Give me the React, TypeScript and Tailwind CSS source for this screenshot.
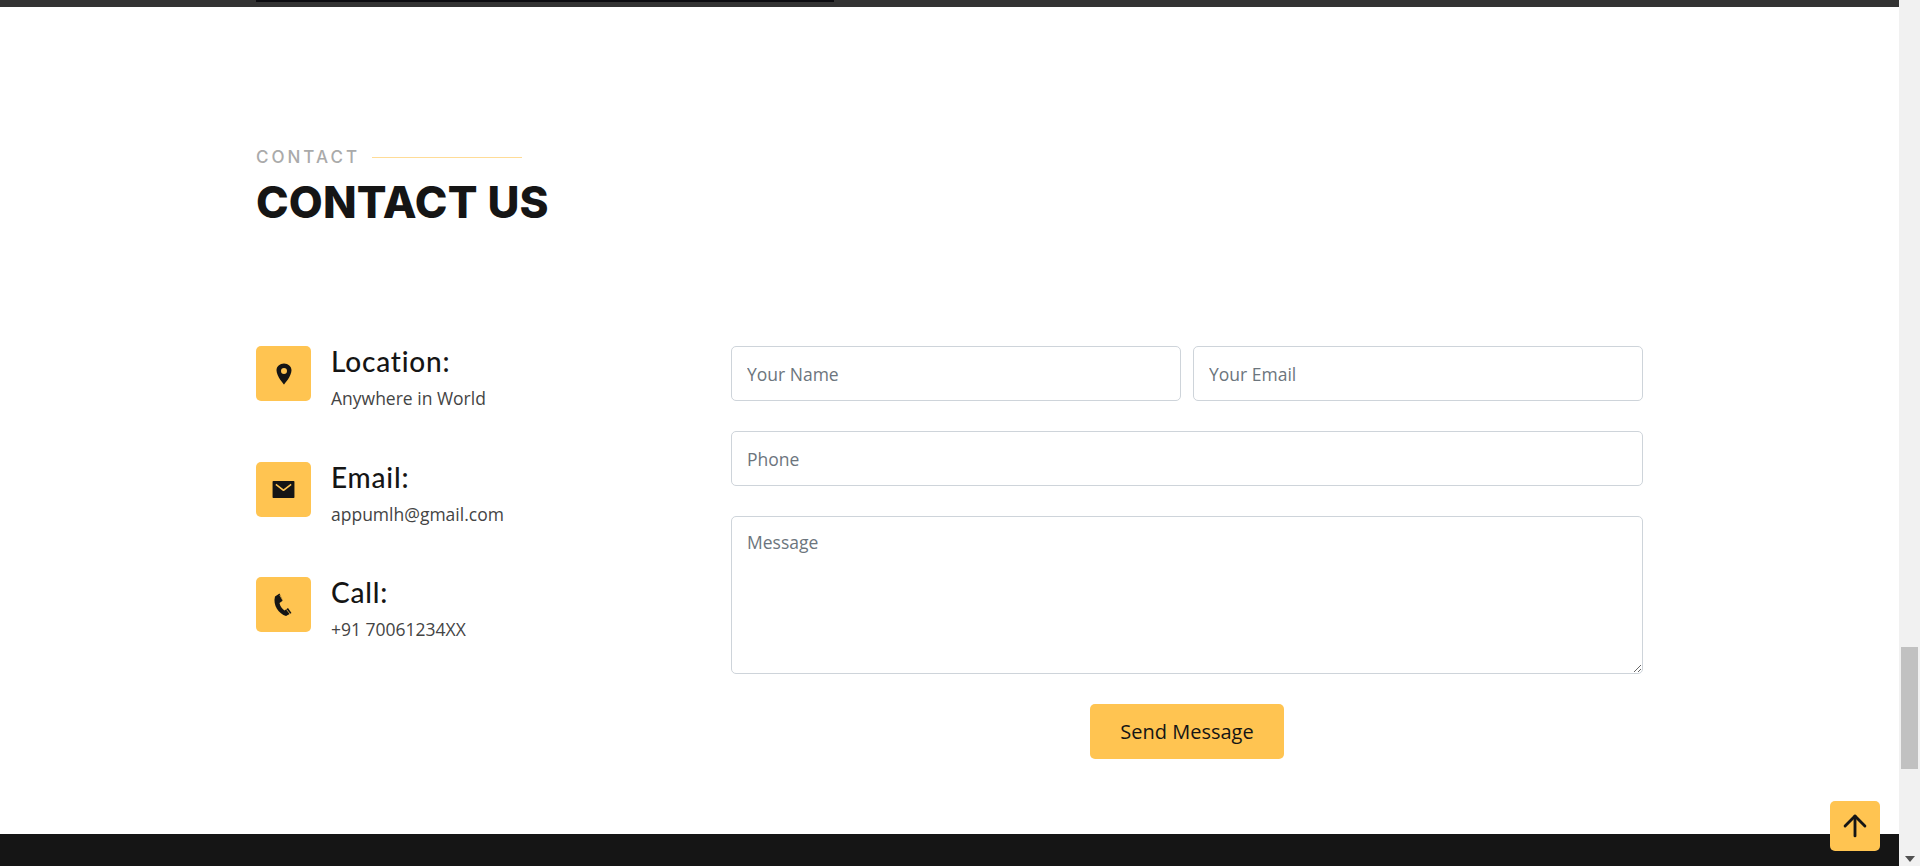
import { IoLocationSharp, IoMailSharp } from 'react-icons/io5';
import { LuArrowUp } from 'react-icons/lu';
import type { ReactNode } from 'react';

const PhoneIcon = () => (
  <svg width="40" height="40" viewBox="0 0 40 40" fill="currentColor">
    <path d="M11 11.5 15.5 8.5 19 15.5 15.5 18C16 21 18 24 20.5 25.5L24 23 27.5 28 22 31C15 29 8.5 20 11 11.5Z" />
    <path d="M15.8 10 19.3 16.2M22.5 24.5 26 29" stroke="#ffc451" strokeWidth="0.8" fill="none" />
  </svg>
);

const CONTACT_INFO: { icon: ReactNode; title: string; text: string; gap: string }[] = [
  { icon: <IoLocationSharp size={24} />, title: 'Location:', text: 'Anywhere in World', gap: 'mb-[51px]' },
  { icon: <IoMailSharp size={25} />, title: 'Email:', text: 'appumlh@gmail.com', gap: 'mb-[50px]' },
  { icon: <PhoneIcon />, title: 'Call:', text: '+91 70061234XX', gap: '' },
];

const fieldClass =
  "h-[55px] w-full rounded-[5px] border border-[#ced4da] bg-white px-[15px] font-['Open_Sans',sans-serif] text-[17.5px] text-[#212529] outline-none placeholder:text-[#6c757d]";

const App = () => {
  return (
    <div className="relative flex h-[866px] overflow-hidden bg-white font-['Open_Sans',sans-serif]">
      <div className="flex min-w-0 flex-1 flex-col">
        <div className="h-[7px] bg-[#333333] pl-[256px]">
          <div className="h-[2px] w-[578px] bg-[#0c0c10]" />
        </div>

        <main className="mx-auto flex w-[1387px] flex-1 flex-col pt-[141px]">
          <div className="flex items-center gap-[12px]">
            <span className="font-['Inter',sans-serif] text-[17px] leading-[18px] font-medium tracking-[3px] text-[#aaaaaa]">
              CONTACT
            </span>
            <span className="h-px w-[150px] bg-[#ffc451]/60" />
          </div>
          <h2 className="mt-[10px] font-['Inter',sans-serif] text-[44px] leading-[53px] font-extrabold tracking-[0.15px] text-[#151515]">
            CONTACT US
          </h2>

          <div className="mt-[117px] flex">
            <div className="w-[475px] shrink-0">
              {CONTACT_INFO.map(item => (
                <div key={item.title} className={`flex gap-5 ${item.gap}`}>
                  <div className="flex size-[55px] shrink-0 items-center justify-center rounded-[5px] bg-[#ffc451] text-[#151515]">
                    {item.icon}
                  </div>
                  <div>
                    <h4 className="font-['Lato',sans-serif] text-[28px] leading-[30px] font-medium tracking-[0.8px] text-[#151515]">
                      {item.title}
                    </h4>
                    <p className="mt-[9px] text-[17.5px] leading-[26px] text-[#444444]">{item.text}</p>
                  </div>
                </div>
              ))}
            </div>

            <form className="flex flex-1 flex-col gap-[30px]">
              <div className="flex gap-3">
                <input className={fieldClass} placeholder="Your Name" />
                <input className={fieldClass} placeholder="Your Email" />
              </div>
              <input className={fieldClass} placeholder="Phone" />
              <textarea
                className="h-[158px] w-full rounded-[5px] border border-[#ced4da] bg-white px-[15px] py-[12px] text-[17.5px] leading-[27px] text-[#212529] outline-none placeholder:text-[#6c757d]"
                placeholder="Message"
              />
              <button
                type="button"
                className="mx-auto h-[55px] w-[194px] rounded-[5px] bg-[#ffc451] text-[20px] text-[#151515]"
              >
                Send Message
              </button>
            </form>
          </div>
        </main>

        <footer className="h-[32px] bg-[#151515]" />
      </div>

      {/* fake scrollbar */}
      <div className="flex w-[21px] shrink-0 flex-col bg-[#f1f1f1] pt-[647px]">
        <div className="mx-auto h-[122px] w-[17px] bg-[#c1c1c1]" />
        <svg className="mx-auto mt-auto mb-[4px]" width="10" height="6" viewBox="0 0 10 6">
          <path d="M0 0h10L5 6z" fill="#505050" />
        </svg>
      </div>

      <a className="absolute top-[801px] left-[1830px] flex size-[50px] items-center justify-center rounded-[5px] bg-[#ffc451] text-[#151515]">
        <LuArrowUp size={34} strokeWidth={2} />
      </a>
    </div>
  );
};

export default App;
